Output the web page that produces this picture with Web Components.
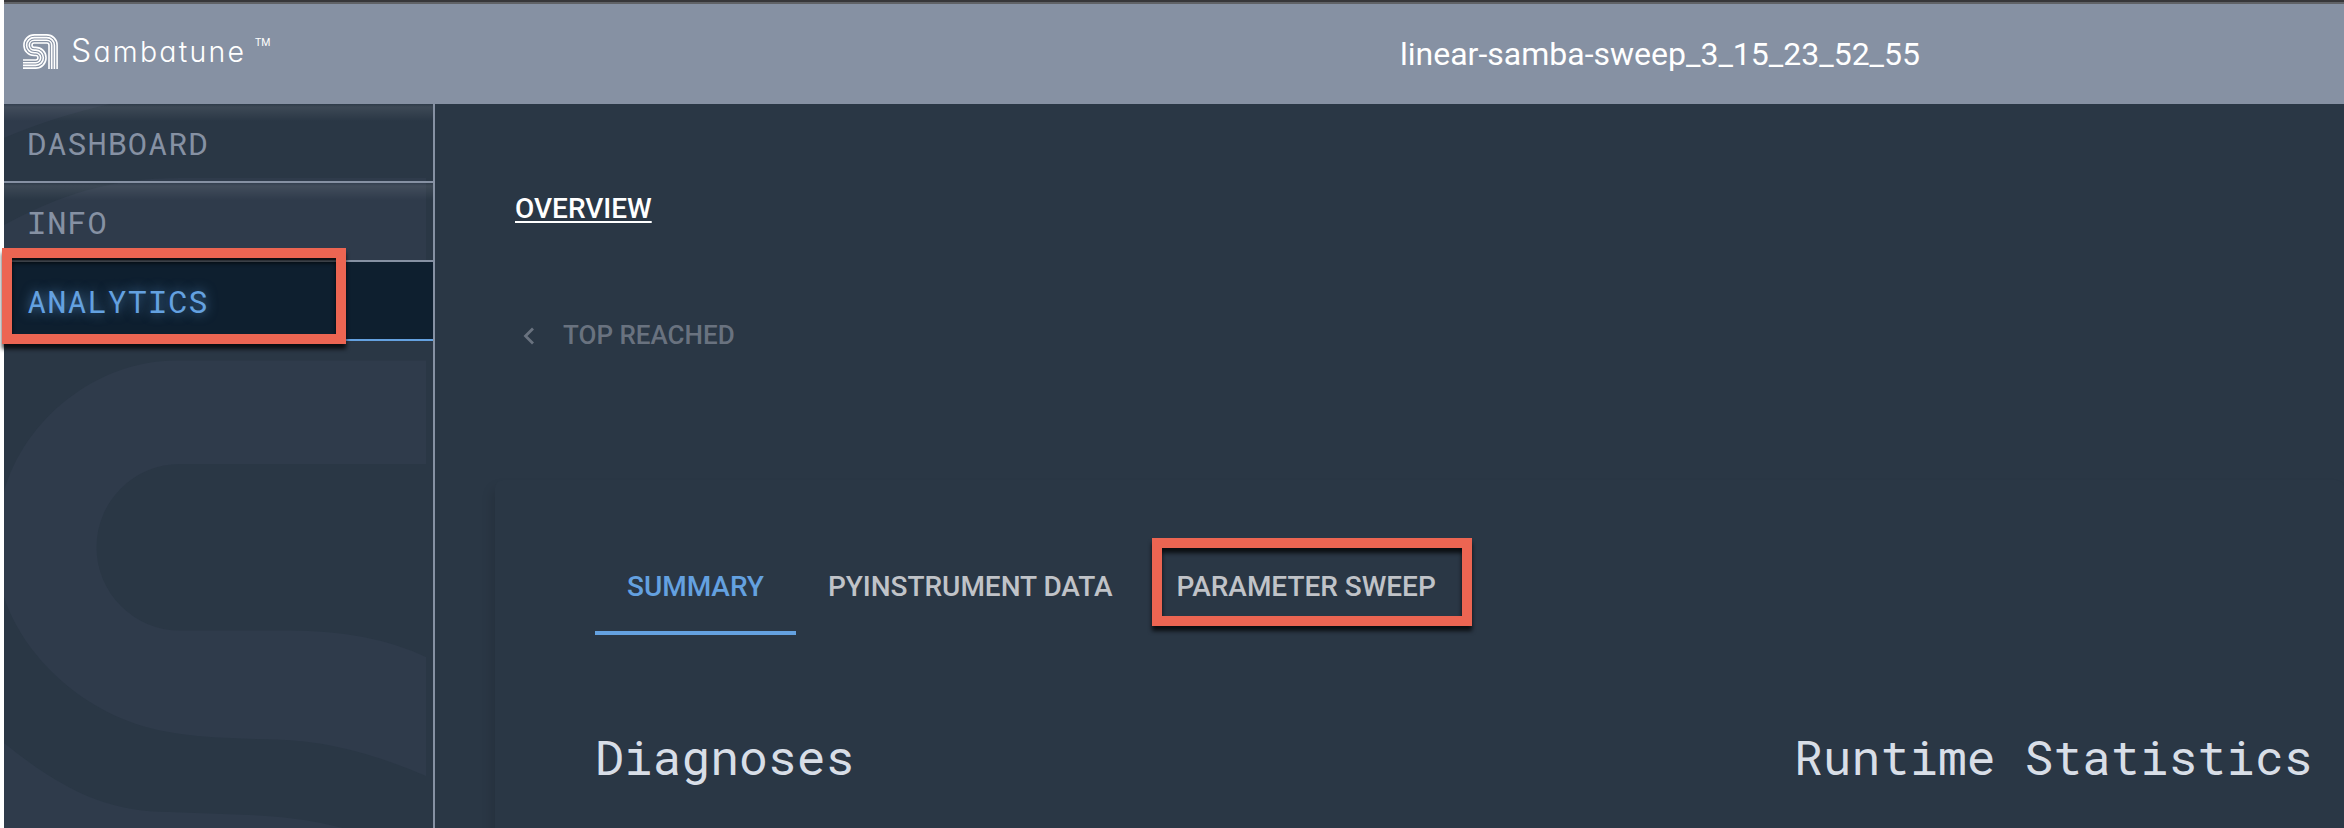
<!DOCTYPE html>
<html lang="en">
<head>
<meta charset="utf-8">
<title>Sambatune</title>
<style>
  html, body { margin: 0; height: 100%; }
  body { background: #fff; overflow: hidden; }
</style>
</head>
<body>
<samba-app></samba-app>

<script>
const SANS = 'Roboto, "Open Sans", sans-serif';
const MONO = '"Roboto Mono", "Liberation Mono", monospace';

class BaseElement extends HTMLElement {
  constructor() {
    super();
    this.attachShadow({ mode: 'open' });
  }
  connectedCallback() {
    this.shadowRoot.innerHTML = this.render();
  }
}

class SambaLogo extends BaseElement {
  // four parallel lines, outermost first
  lines() {
    return [0, 1, 2, 3].map(i => {
      const d = 2.7 * i;
      const r = 10.3 - d;
      const r2 = 2.25 + d;
      return `<path d="M${34.1 - d} 35V11.2A${r} ${r} 0 0 0 23.8 ${0.9 + d}H11.2A${r} ${r} 0 0 0 11.2 ${21.5 - d}H12.7A${r2} ${r2} 0 0 1 12.7 ${26 + d}H0"/>`;
    }).join('');
  }

  render() {
    return `
      <style>
        :host { display: flex; align-items: flex-start; color: #fff; }
        .mark { width: 35px; height: 35px; margin-top: 5px; }
        .word { margin-left: 14px; width: 174px; height: 48px; }
        .word text { font: 300 28.5px Inter, sans-serif; font-feature-settings: "cv11"; fill: #fff; }
        .word .cap { font-size: 32px; }
        .tm { font: 400 10.5px/12px ${SANS}; margin: 8px 0 0 9px; }
      </style>
      <svg class="mark" viewBox="0 0 35 35" fill="none" stroke="#fff" stroke-width="1.6">${this.lines()}</svg>
      <svg class="word"><text x="-1" y="33" textLength="173"><tspan class="cap">S</tspan>ambatune</text></svg>
      <span class="tm">TM</span>
    `;
  }
}

class AppHeader extends BaseElement {
  render() {
    return `
      <style>
        :host {
          display: grid; grid-template-columns: 1396px 1fr;
          box-sizing: border-box; height: 104px; padding-top: 29px;
          background: linear-gradient(#37373a 2px, #606266 2px 4px, #8691a3 4px);
        }
        samba-logo { margin-left: 19px; }
        .title { font: 32px/50px ${SANS}; color: #fff; white-space: nowrap; }
      </style>
      <samba-logo></samba-logo>
      <div class="title"><slot></slot></div>
    `;
  }
}

class NavItem extends BaseElement {
  render() {
    return `
      <style>
        :host {
          display: block; box-sizing: border-box; height: 79px; padding-left: 23px;
          border-bottom: 2px solid #8691a3;
          font: 32px/77px ${MONO}; letter-spacing: .96px; color: #8691a3;
          background: linear-gradient(rgba(255,255,255,.02), rgba(255,255,255,.09) 3px, rgba(255,255,255,0) 17px);
        }
        :host([active]) {
          color: #64a1e0; background: #0e1f2f; border-color: #64a1e0;
          text-shadow: 0 0 12px rgba(100,161,224,.7);
        }
      </style>
      <slot></slot>
    `;
  }
}

class SideNav extends BaseElement {
  render() {
    return `
      <style>
        :host { display: block; position: relative; border-right: 2px solid #8691a3; overflow: hidden; }
        .motif { position: absolute; left: 0; top: 0; width: 429px; height: 724px; }
        nav { position: relative; }
      </style>
      <svg class="motif" viewBox="4 104 429 724" fill="#2f3b4b">
        <path d="M4 104H110Q50 118 4 138Z"/>
        <path d="M4 225C60 195 110 178 180 178H426V262H4Z"/>
        <path d="M426 360.500V464H180A83.500 83.250 0 0 0 180 630.500H290Q370 630.500 426 657V776Q345 741 276 739.500C220 738 185 737 150 728C80 710 23 655 4 597V492C24 420 96 360.500 176 360.500Z"/>
        <path d="M4 743C60 788 105 812 170 812L260 815.500Q305 818 343 828H4Z"/>
      </svg>
      <nav><slot></slot></nav>
    `;
  }
}

class TabItem extends BaseElement {
  render() {
    return `
      <style>
        :host {
          display: block; box-sizing: border-box; height: 96px; padding: 0 32px;
          font: 500 28px/96px ${SANS}; letter-spacing: -.03px; color: #c0c3c8; white-space: nowrap;
        }
        :host([selected]) { color: #64a1e0; border-bottom: 4px solid #64a1e0; }
      </style>
      <slot></slot>
    `;
  }
}

class AnalyticsView extends BaseElement {
  render() {
    return `
      <style>
        :host { display: block; padding: 88px 0 0 60px; }
        .overview { margin-left: 20px; font: 500 28px/34px ${SANS}; color: #fff; text-decoration: underline; text-decoration-thickness: 2px; text-underline-offset: 3px; }
        .back { display: flex; align-items: center; margin: 91px 0 0 28px; height: 36px; font: 500 26px/36px ${SANS}; color: #69727f; }
        .back svg { width: 12px; height: 18px; margin: 2px 28px 0 0; }
        .panel { margin-top: 127px; height: 400px; padding: 59px 0 0 100px; border-radius: 8px; box-shadow: -3px 8px 12px rgba(0,0,0,.12); background: #2a3745; }
        .tabs { display: flex; }
        .heads { display: grid; grid-template-columns: 1199px 1fr; margin-top: 93px; }
        h2 { margin: 0; font: 400 48px/58px ${MONO}; color: #d8dee7; white-space: nowrap; }
      </style>
      <div class="overview">OVERVIEW</div>
      <div class="back">
        <svg viewBox="0 0 12 18" fill="none" stroke="currentColor" stroke-width="2.800"><path d="M10 1.500 2.500 9l7.500 7.500"/></svg>
        <span>TOP REACHED</span>
      </div>
      <section class="panel">
        <div class="tabs">
          <tab-item selected>SUMMARY</tab-item>
          <tab-item>PYINSTRUMENT DATA</tab-item>
          <tab-item>PARAMETER SWEEP</tab-item>
        </div>
        <div class="heads">
          <h2>Diagnoses</h2>
          <h2>Runtime Statistics</h2>
        </div>
      </section>
    `;
  }
}

// red callout frame that lies over the page
class CalloutBox extends BaseElement {
  render() {
    return `
      <style>
        :host {
          position: absolute; box-sizing: border-box; border: 10px solid #ec6552;
          filter: drop-shadow(0 5px 2px rgba(0,0,0,.75));
        }
      </style>
    `;
  }
}

class SambaApp extends BaseElement {
  render() {
    return `
      <style>
        :host { display: block; position: relative; box-sizing: border-box; height: 828px; padding-left: 4px; overflow: hidden; }
        .body { display: grid; grid-template-columns: 431px 1fr; height: 724px; background: #2a3745; overflow: hidden; }
        .on-nav { left: 2px; top: 248px; width: 344px; height: 96px; }
        .on-tab { left: 1152px; top: 538px; width: 320px; height: 88px; }
      </style>
      <app-header>linear-samba-sweep_3_15_23_52_55</app-header>
      <div class="body">
        <side-nav>
          <nav-item>DASHBOARD</nav-item>
          <nav-item>INFO</nav-item>
          <nav-item active>ANALYTICS</nav-item>
        </side-nav>
        <analytics-view></analytics-view>
      </div>
      <callout-box class="on-nav"></callout-box>
      <callout-box class="on-tab"></callout-box>
    `;
  }
}

customElements.define('samba-logo', SambaLogo);
customElements.define('app-header', AppHeader);
customElements.define('nav-item', NavItem);
customElements.define('side-nav', SideNav);
customElements.define('tab-item', TabItem);
customElements.define('analytics-view', AnalyticsView);
customElements.define('callout-box', CalloutBox);
customElements.define('samba-app', SambaApp);
</script>
</body>
</html>
